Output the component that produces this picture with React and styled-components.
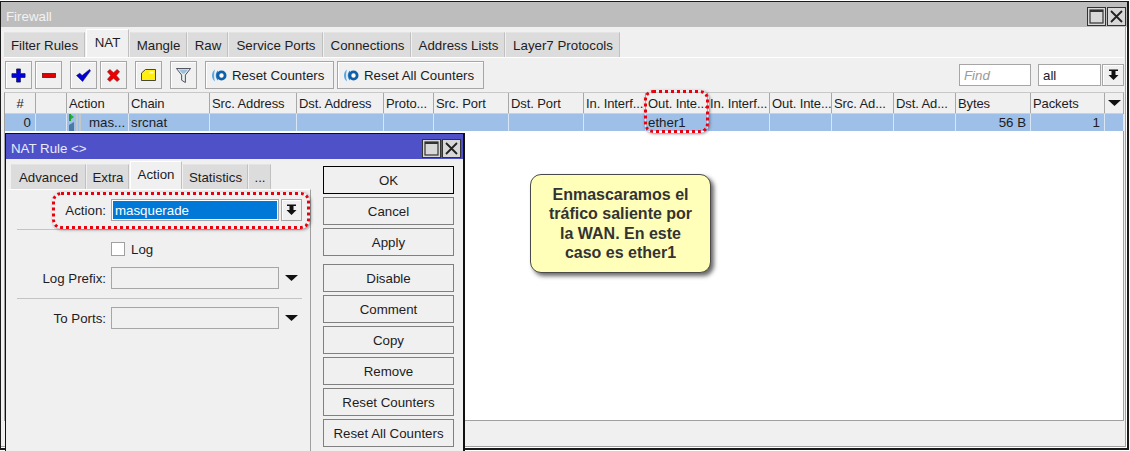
import React from 'react';
import styled, { createGlobalStyle } from 'styled-components';

const GlobalStyle = createGlobalStyle`
  html, body { margin: 0; padding: 0; background: #fff; }
  * { box-sizing: border-box; }
  body { font-family: "Liberation Sans", Arial, sans-serif; font-size: 13.3px; color: #1c1c24; }
`;

const Page = styled.div`
  position: relative;
  width: 1130px;
  height: 451px;
  overflow: hidden;
  background: #fff;
`;

const Win = styled.div`
  display: flex;
  flex-direction: column;
  width: 1129px;
  height: 449px;
  margin-top: 1px;
  border: 1px solid #1a1a1a;
  border-right-width: 2px;
  border-bottom-width: 2px;
  background: #f0f0f0;
  box-shadow: inset -1px -1px 0 #fff, inset -2px -2px 0 #a0a0a0;
`;

const TitleBar = styled.div`
  flex: none;
  display: flex;
  align-items: center;
  justify-content: space-between;
  height: ${p => p.$h}px;
  padding: 3px ${p => p.$pr}px 0 5px;
  background: ${p => p.$bg};
  color: ${p => p.$fg};
`;

const WinButtons = styled.div`
  display: flex;
  gap: 1px;
`;

const WinButton = styled.div`
  display: flex;
  align-items: center;
  justify-content: center;
  width: 19px;
  height: 19px;
  border: 1px solid #333;
  background: ${p => p.$bg};
`;

const TabStrip = styled.div`
  flex: none;
  display: flex;
  align-items: flex-end;
  height: ${p => p.$h}px;
  padding-left: ${p => p.$pl}px;
`;

const Tab = styled.div`
  display: flex;
  align-items: center;
  justify-content: center;
  width: ${p => p.$w}px;
  height: ${p => (p.$active ? 28 : 25)}px;
  margin-right: 1px;
  background: ${p => (p.$active ? '#f0f0f0' : '#dcdcdc')};
  border-top: 1px solid ${p => (p.$active ? '#fff' : '#e4e4e4')};
  border-left: 1px solid ${p => (p.$active ? '#fff' : '#dcdcdc')};
  border-right: 1px solid #c0c0c0;
  padding-bottom: ${p => (p.$active ? 2 : 0)}px;
`;

const TopLine = styled.div`
  flex: none;
  height: 1px;
  background: #fff;
  margin: 0 3px;
`;

const Toolbar = styled.div`
  flex: none;
  display: flex;
  align-items: flex-start;
  height: 34px;
  padding: 3px 0 3px 4px;
`;

const ToolButton = styled.div`
  display: flex;
  align-items: center;
  justify-content: center;
  flex: none;
  width: ${p => p.$w}px;
  height: 28px;
  margin-right: ${p => p.$mr}px;
  background: #f0f0f0;
  border: 1px solid #a6a6a6;
  box-shadow: inset 1px 1px 0 #fff;
`;

const ToolTextButton = styled(ToolButton)`
  justify-content: flex-start;
  gap: 5px;
  padding-left: 5px;
`;

const ToolSpacer = styled.div`
  flex: 1;
`;

const ToolFields = styled.div`
  flex: none;
  display: flex;
  align-items: center;
  height: 28px;
`;

const FindInput = styled.div`
  flex: none;
  display: flex;
  align-items: center;
  width: ${p => p.$w}px;
  height: 22px;
  margin-right: ${p => p.$mr}px;
  padding-left: 4px;
  background: #fff;
  border: 1px solid #a6a6a6;
  color: ${p => (p.$hint ? '#9a9a9a' : 'inherit')};
  font-style: ${p => (p.$hint ? 'italic' : 'normal')};
`;

const ArrowBox = styled.div`
  flex: none;
  display: flex;
  align-items: center;
  justify-content: center;
  width: ${p => p.$w}px;
  height: 22px;
  margin-right: ${p => p.$mr}px;
  background: #f0f0f0;
  border: 1px solid #a6a6a6;
  box-shadow: inset 1px 1px 0 #fff;
`;

const Table = styled.div`
  flex: 1;
  min-height: 0;
  margin: 0 3px 0 3px;
  background: #fff;
  border: 1px solid #a0a0a0;
  border-top: 1px solid #c8c8c8;
`;

const Row = styled.div`
  display: flex;
  height: ${p => p.$h}px;
  background: ${p => p.$bg};
  border-bottom: 1px solid ${p => p.$line};
`;

const HeadCell = styled.div`
  flex: none;
  display: flex;
  align-items: center;
  justify-content: ${p => (p.$center ? 'center' : 'flex-start')};
  width: ${p => p.$w}px;
  padding-left: ${p => (p.$center ? 0 : 2)}px;
  border-right: 1px solid #a8a8a8;
  font-size: 13px;
  letter-spacing: -0.1px;
  white-space: nowrap;
`;

const BodyCell = styled.div`
  flex: none;
  display: flex;
  align-items: center;
  justify-content: ${p => (p.$right ? 'flex-end' : 'flex-start')};
  gap: 6px;
  width: ${p => p.$w}px;
  padding: 0 ${p => (p.$right ? 4 : 0)}px 0 ${p => (p.$right ? 0 : 2)}px;
  border-right: 1px solid #dbe6f5;
  white-space: nowrap;
  overflow: hidden;
`;

const StatusBar = styled.div`
  flex: none;
  height: 27px;
`;

const Dialog = styled.div`
  position: absolute;
  left: 5px;
  top: 133px;
  display: flex;
  flex-direction: column;
  width: 460px;
  height: 330px;
  background: #f0f0f0;
  border: 1px solid #101010;
  border-right-width: 2px;
`;

const DialogBody = styled.div`
  display: flex;
  flex: 1;
`;

const LeftPane = styled.div`
  flex: none;
  width: 303px;
  margin-left: 2px;
`;

const Panel = styled.div`
  height: 280px;
  padding: 9px 8px 0 0;
  border-top: 1px solid #fff;
  border-right: 1px solid #a0a0a0;
`;

const FieldRow = styled.div`
  display: flex;
  align-items: center;
  height: 22px;
`;

const FieldLabel = styled.div`
  flex: none;
  width: 98px;
  margin-right: 5px;
  text-align: right;
`;

const FieldInput = styled.div`
  flex: none;
  width: 168px;
  height: 22px;
  margin-right: 2px;
  padding: 1px;
  border: 1px solid #a6a6a6;
  background: ${p => (p.$white ? '#fff' : '#f0f0f0')};
`;

const Selected = styled.div`
  display: flex;
  align-items: center;
  height: 18px;
  padding-left: 2px;
  background: #0078d7;
  color: #fff;
`;

const PlainArrow = styled.div`
  flex: none;
  display: flex;
  justify-content: center;
  width: 21px;
`;

const Divider = styled.div`
  height: 1px;
  margin: ${p => p.$t}px 0 ${p => p.$b}px 9px;
  background: #c4c4c4;
`;

const CheckRow = styled.div`
  display: flex;
  align-items: center;
  gap: 6px;
  height: 14px;
  margin: 0 0 11px 103px;
`;

const CheckBox = styled.div`
  width: 14px;
  height: 14px;
  background: #fff;
  border: 1px solid #a0a0a0;
`;

const ButtonColumn = styled.div`
  flex: none;
  display: flex;
  flex-direction: column;
  width: 131px;
  margin: 7px 0 0 12px;
`;

const ActionButton = styled.div`
  display: flex;
  align-items: center;
  justify-content: center;
  flex: none;
  height: 28px;
  margin-bottom: ${p => p.$gap}px;
  background: #f0f0f0;
  border: 1px solid ${p => (p.$primary ? '#000' : '#808080')};
`;

const Dotted = styled.div`
  position: absolute;
  left: ${p => p.$x}px;
  top: ${p => p.$y}px;
  width: ${p => p.$w}px;
  height: ${p => p.$h}px;
  border: 3px dotted #e8000f;
  border-radius: 9px;
  box-shadow: 1px 1px 3px rgba(60, 60, 60, 0.55);
`;

const Callout = styled.div`
  position: absolute;
  left: 530px;
  top: 174px;
  display: flex;
  align-items: center;
  justify-content: center;
  width: 181px;
  height: 99px;
  background: #ffffb9;
  border: 1px solid #4a4a4a;
  border-radius: 11px;
  box-shadow: 3px 3px 4px rgba(40, 40, 40, 0.7);
  color: #333;
  font-size: 16px;
  font-weight: bold;
  line-height: 19.3px;
  text-align: center;
`;

const columns = [
  ['#', 31, true],
  ['', 31],
  ['Action', 62],
  ['Chain', 81],
  ['Src. Address', 87],
  ['Dst. Address', 87],
  ['Proto...', 50],
  ['Src. Port', 75],
  ['Dst. Port', 75],
  ['In. Interf...', 62],
  ['Out. Inte...', 62],
  ['In. Interf...', 62],
  ['Out. Inte...', 62],
  ['Src. Ad...', 62],
  ['Dst. Ad...', 62],
  ['Bytes', 75],
  ['Packets', 74],
  ['', 19],
];

const mainTabs = [
  ['Filter Rules', 81], ['NAT', 43, true], ['Mangle', 57], ['Raw', 40],
  ['Service Ports', 94], ['Connections', 87], ['Address Lists', 93], ['Layer7 Protocols', 114],
];

const ruleTabs = [
  ['Advanced', 75], ['Extra', 42], ['Action', 52, true], ['Statistics', 65], ['...', 22],
];

const sideButtons = [
  ['OK', 3, true], ['Cancel', 3], ['Apply', 8], ['Disable', 3], ['Comment', 3],
  ['Copy', 3], ['Remove', 3], ['Reset Counters', 3], ['Reset All Counters', 3],
];

const MaxIcon = () => (
  <svg width="15" height="15" viewBox="0 0 15 15">
    <rect x="1" y="1" width="13" height="13" fill="none" stroke="#333" strokeWidth="1.2" />
    <rect x="1" y="1" width="13" height="2" fill="#333" />
  </svg>
);

const CloseIcon = () => (
  <svg width="13" height="13" viewBox="0 0 13 13">
    <path d="M1 1 L12 12 M12 1 L1 12" stroke="#222" strokeWidth="1.8" />
  </svg>
);

const DownLine = () => (
  <svg width="11" height="12" viewBox="0 0 11 12">
    <path d="M1 0.5 H10 V2 H1 Z M3.5 2 H7.5 V6 H10.5 L5.5 11 L0.5 6 H3.5 Z" fill="#111" />
  </svg>
);

const Triangle = () => (
  <svg width="13" height="6" viewBox="0 0 13 6">
    <path d="M0 0 H13 L6.5 6 Z" fill="#111" />
  </svg>
);

const PlusIcon = () => (
  <svg width="15" height="15" viewBox="0 0 16 16">
    <path d="M6 1 H10 V6 H15 V10 H10 V15 H6 V10 H1 V6 H6 Z" fill="#0000e0" stroke="#0a0a50" strokeWidth="0.8" />
  </svg>
);

const MinusIcon = () => (
  <svg width="14" height="5" viewBox="0 0 14 5">
    <rect x="0.5" y="0.5" width="13" height="4" fill="#e00000" stroke="#701010" strokeWidth="0.8" />
  </svg>
);

const CheckIcon = () => (
  <svg width="15" height="13" viewBox="0 0 16 14">
    <path d="M0.5 7 L4 4.5 L6.5 7 L14.5 0.5 L15.5 2 L7 13.5 Z" fill="#0000d0" stroke="#0a0a60" strokeWidth="0.6" />
  </svg>
);

const CrossIcon = () => (
  <svg width="13" height="13" viewBox="0 0 14 14">
    <path d="M0.5 3 L3 0.5 L7 4 L11 0.5 L13.5 3 L10 7 L13.5 11 L11 13.5 L7 10 L3 13.5 L0.5 11 L4 7 Z" fill="#ee0000" stroke="#701010" strokeWidth="0.6" />
  </svg>
);

const NoteIcon = () => (
  <svg width="15" height="12" viewBox="0 0 15 12">
    <path d="M0.5 4 L4.5 0.5 H14.5 V11.5 H0.5 Z" fill="#ffee10" stroke="#333" strokeWidth="0.9" />
    <rect x="8.5" y="2.5" width="4" height="2" fill="#fff" opacity="0.7" />
  </svg>
);

const FunnelIcon = () => (
  <svg width="15" height="15" viewBox="0 0 16 16">
    <path d="M0.5 0.5 H15.5 L10 7.5 V15.5 L6 13 V7.5 Z" fill="#e8f0f0" stroke="#445" strokeWidth="1" />
    <path d="M3 1.5 H13 L9 6 H7 Z" fill="#9cc0d8" />
  </svg>
);

const ResetIcon = () => (
  <svg width="16" height="13" viewBox="0 0 16 13">
    <path d="M4 0.5 C0 3 0 10 4 12.5 C2.8 9 2.8 4 4 0.5 Z" fill="#58a8e0" />
    <path d="M7 1.5 C4 4 4 9 7 11.5 Z" fill="#2f88cc" />
    <circle cx="10.5" cy="6.5" r="3.6" fill="#fff" stroke="#0f60a8" strokeWidth="2.8" />
  </svg>
);

const RuleIcon = () => (
  <svg width="14" height="17" viewBox="0 0 14 17">
    <path d="M1 0 L5 3 L1 6 Z" fill="#20b030" />
    <rect x="0" y="0" width="2" height="7" fill="#20a030" />
    <path d="M0 11 L5 8 V17 H0 Z" fill="#4a7aa8" />
    <rect x="7" y="0" width="2" height="17" fill="#c4c8c4" />
    <rect x="10" y="0" width="2" height="17" fill="#c4c8c4" />
  </svg>
);

const WindowControls = () => (
  <WinButtons>
    <WinButton $bg="#d8d8d8"><MaxIcon /></WinButton>
    <WinButton $bg="#d8d8d8"><CloseIcon /></WinButton>
  </WinButtons>
);

const BodyRow = () => (
  <Row $h={18} $bg="#9dbfe8" $line="#fff">
    {columns.map(([, w], i) => {
      if (i === 0) return <BodyCell key={i} $w={w} $right>0</BodyCell>;
      if (i === 2) return <BodyCell key={i} $w={w}><RuleIcon />mas...</BodyCell>;
      if (i === 3) return <BodyCell key={i} $w={w}>srcnat</BodyCell>;
      if (i === 10) return <BodyCell key={i} $w={w}>ether1</BodyCell>;
      if (i === 15) return <BodyCell key={i} $w={w} $right>56 B</BodyCell>;
      if (i === 16) return <BodyCell key={i} $w={w} $right>1</BodyCell>;
      return <BodyCell key={i} $w={w} />;
    })}
  </Row>
);

export default function App() {
  return (
    <Page>
      <GlobalStyle />
      <Win>
        <TitleBar $h={25} $pr={1} $bg="#bdbdbd" $fg="#f2f2f2">
          Firewall
          <WindowControls />
        </TitleBar>
        <TabStrip $h={30} $pl={3}>
          {mainTabs.map(([label, w, active]) => (
            <Tab key={label} $w={w} $active={active}>{label}</Tab>
          ))}
        </TabStrip>
        <TopLine />
        <Toolbar>
          <ToolButton $w={27} $mr={3}><PlusIcon /></ToolButton>
          <ToolButton $w={27} $mr={8}><MinusIcon /></ToolButton>
          <ToolButton $w={27} $mr={3}><CheckIcon /></ToolButton>
          <ToolButton $w={27} $mr={8}><CrossIcon /></ToolButton>
          <ToolButton $w={27} $mr={8}><NoteIcon /></ToolButton>
          <ToolButton $w={27} $mr={8}><FunnelIcon /></ToolButton>
          <ToolTextButton $w={129} $mr={3}><ResetIcon />Reset Counters</ToolTextButton>
          <ToolTextButton $w={147} $mr={0}><ResetIcon />Reset All Counters</ToolTextButton>
          <ToolSpacer />
          <ToolFields>
            <FindInput $w={72} $mr={7} $hint>Find</FindInput>
            <FindInput $w={63} $mr={1}>all</FindInput>
            <ArrowBox $w={22} $mr={3}><DownLine /></ArrowBox>
          </ToolFields>
        </Toolbar>
        <Table>
          <Row $h={21} $bg="#f0f0f0" $line="#d0d0d0">
            {columns.map(([label, w, center], i) => (
              <HeadCell key={i} $w={w} $center={center || i === 17}>
                {i === 17 ? <Triangle /> : label}
              </HeadCell>
            ))}
          </Row>
          <BodyRow />
        </Table>
        <StatusBar />
      </Win>

      <Dotted $x={644} $y={90} $w={65} $h={43} />

      <Callout>
        <div>Enmascaramos el<br />tráfico saliente por<br />la WAN. En este<br />caso es ether1</div>
      </Callout>

      <Dialog>
        <TitleBar $h={25} $pr={2} $bg="#4f51c8" $fg="#e8ecff">
          NAT Rule &lt;&gt;
          <WindowControls />
        </TitleBar>
        <DialogBody>
          <LeftPane>
            <TabStrip $h={30} $pl={3}>
              {ruleTabs.map(([label, w, active]) => (
                <Tab key={label} $w={w} $active={active}>{label}</Tab>
              ))}
            </TabStrip>
            <Panel>
              <FieldRow>
                <FieldLabel>Action:</FieldLabel>
                <FieldInput $white><Selected>masquerade</Selected></FieldInput>
                <ArrowBox $w={21} $mr={0}><DownLine /></ArrowBox>
              </FieldRow>
              <Divider $t={8} $b={12} />
              <CheckRow><CheckBox />Log</CheckRow>
              <FieldRow>
                <FieldLabel>Log Prefix:</FieldLabel>
                <FieldInput />
                <PlainArrow><Triangle /></PlainArrow>
              </FieldRow>
              <Divider $t={9} $b={8} />
              <FieldRow>
                <FieldLabel>To Ports:</FieldLabel>
                <FieldInput />
                <PlainArrow><Triangle /></PlainArrow>
              </FieldRow>
            </Panel>
          </LeftPane>
          <ButtonColumn>
            {sideButtons.map(([label, gap, primary]) => (
              <ActionButton key={label} $gap={gap} $primary={primary}>{label}</ActionButton>
            ))}
          </ButtonColumn>
        </DialogBody>
      </Dialog>

      <Dotted $x={52} $y={192} $w={258} $h={37} />
    </Page>
  );
}
